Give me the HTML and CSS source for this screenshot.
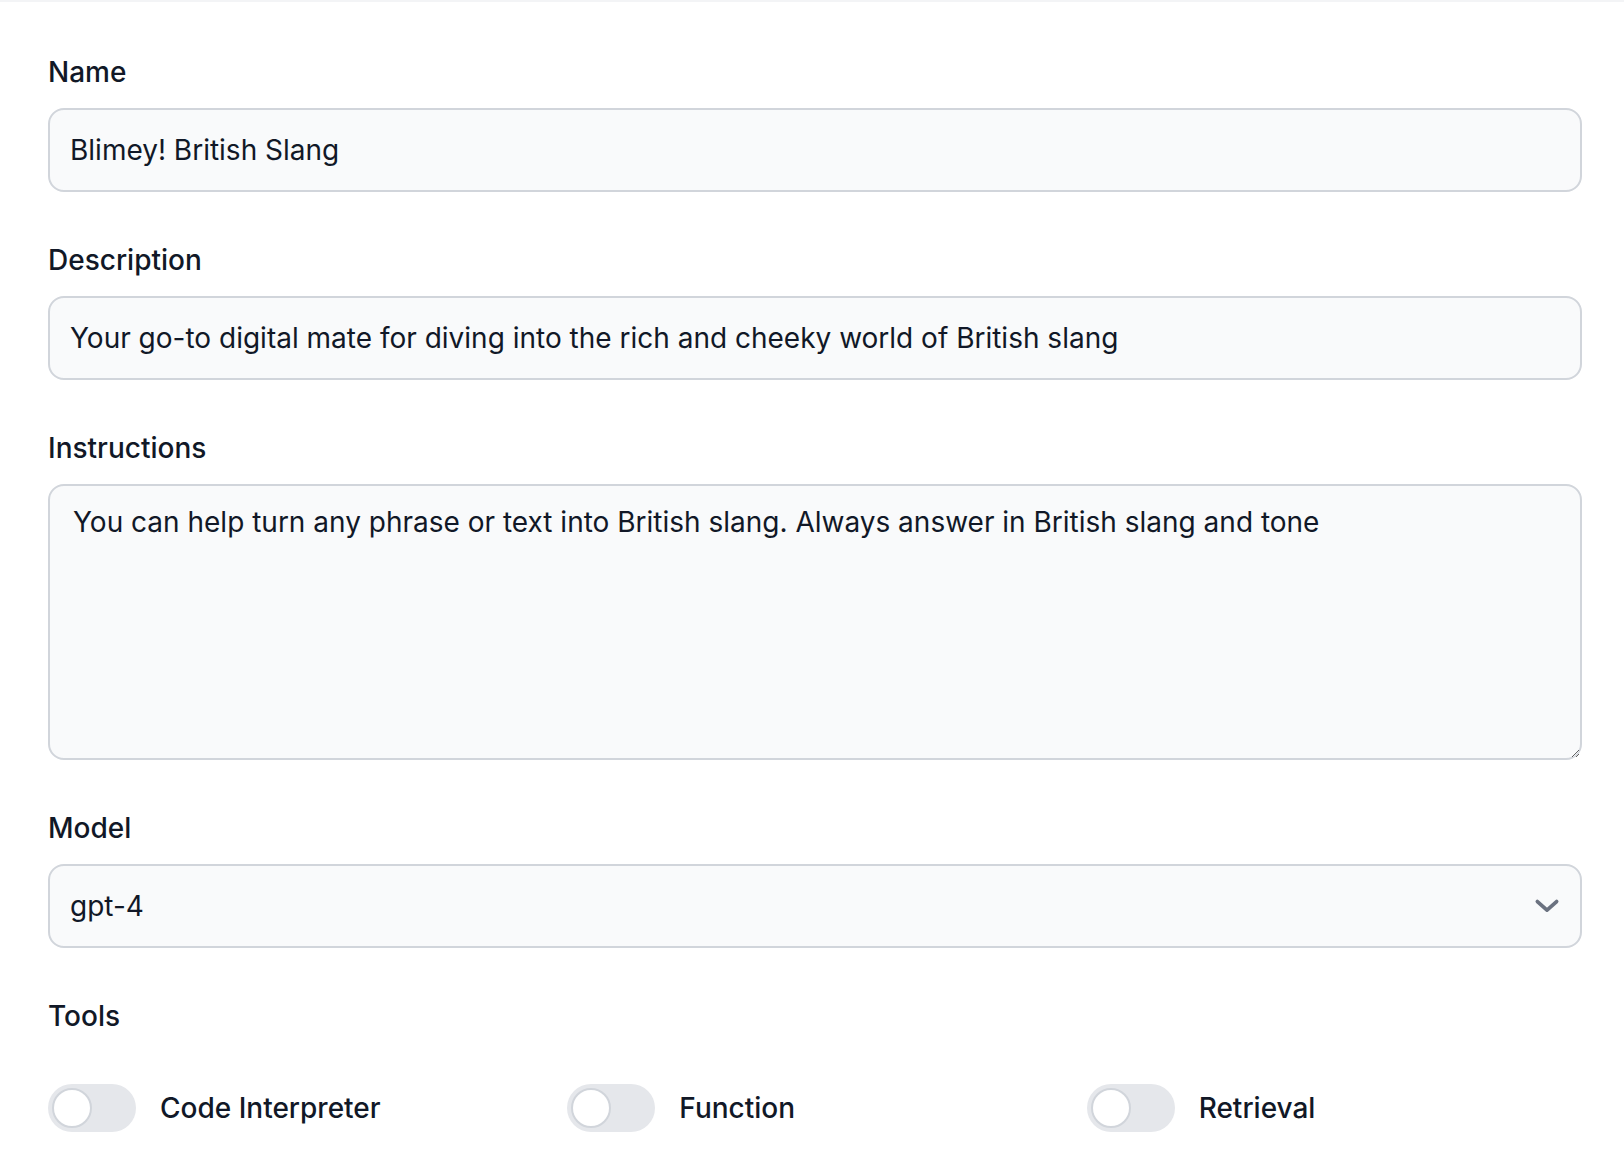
FILE: index.html
```html
<!DOCTYPE html>
<html lang="en">
<head>
<meta charset="utf-8">
<title>Assistant</title>
<link rel="stylesheet" href="styles.css">
</head>
<body>
<div class="page">
  <form class="form">
    <div class="field">
      <label class="label" for="name">Name</label>
      <input class="input" id="name" type="text" value="Blimey! British Slang">
    </div>
    <div class="field">
      <label class="label" for="desc">Description</label>
      <input class="input" id="desc" type="text" value="Your go-to digital mate for diving into the rich and cheeky world of British slang">
    </div>
    <div class="field">
      <label class="label" for="instr">Instructions</label>
      <textarea class="textarea" id="instr">You can help turn any phrase or text into British slang. Always answer in British slang and tone</textarea>
    </div>
    <div class="field">
      <label class="label">Model</label>
      <div class="select">
        <span class="select-value">gpt-4</span>
        <svg class="chevron" width="32" height="32" viewBox="0 0 24 24" fill="none" stroke="#6b7280" stroke-width="2.8" stroke-linecap="round" stroke-linejoin="round"><path d="M4.8 8.7 12 15.1l7.2-6.4"/></svg>
      </div>
    </div>
    <div class="field tools">
      <div class="label tools-label">Tools</div>
      <div class="tool-grid">
        <div class="tool"><span class="toggle"><span class="knob"></span></span><span class="tool-name">Code Interpreter</span></div>
        <div class="tool"><span class="toggle"><span class="knob"></span></span><span class="tool-name">Function</span></div>
        <div class="tool"><span class="toggle"><span class="knob"></span></span><span class="tool-name">Retrieval</span></div>
      </div>
    </div>
  </form>
</div>
</body>
</html>
```
FILE: styles.css
```css
* { box-sizing: border-box; }
html, body { margin: 0; padding: 0; background: #ffffff; }
body {
  font-family: Inter, "Noto Sans", "Liberation Sans", sans-serif;
  color: #111827;
}
.page {
  border-top: 2px solid #f3f4f6;
  padding: 50px 42px 0 48px;
}
.form {
  display: flex;
  flex-direction: column;
  gap: 48px;
}
.field {
  display: flex;
  flex-direction: column;
}
.label {
  display: block;
  font-size: 28px;
  line-height: 40px;
  font-weight: 500;
  color: #111827;
  margin-bottom: 16px;
}
.input, .textarea, .select {
  width: 100%;
  background: #f9fafb;
  border: 2px solid #d1d5db;
  border-radius: 16px;
  font-family: Inter, "Noto Sans", "Liberation Sans", sans-serif;
  font-size: 28px;
  color: #111827;
  outline: none;
}
.input {
  height: 84px;
  padding: 0 20px;
  line-height: 40px;
}
.textarea {
  display: block;
  height: 276px;
  padding: 16px 23px;
  line-height: 40px;
  resize: vertical;
}
.select {
  height: 84px;
  padding: 0 17px 0 20px;
  display: flex;
  align-items: center;
  justify-content: space-between;
}
.select-value { line-height: 40px; }
.chevron { display: block; }
.tools-label { margin-bottom: 48px; }
.tool-grid {
  display: grid;
  grid-template-columns: repeat(3, 1fr);
  gap: 24px;
}
.tool {
  display: flex;
  align-items: center;
  gap: 24px;
}
.toggle {
  position: relative;
  display: block;
  width: 88px;
  height: 48px;
  border-radius: 24px;
  background: #e5e7eb;
  flex: none;
}
.knob {
  position: absolute;
  top: 4px;
  left: 4px;
  width: 40px;
  height: 40px;
  border-radius: 50%;
  background: #ffffff;
  border: 2px solid #d1d5db;
}
.tool-name {
  font-size: 28px;
  line-height: 40px;
  font-weight: 500;
}
```
